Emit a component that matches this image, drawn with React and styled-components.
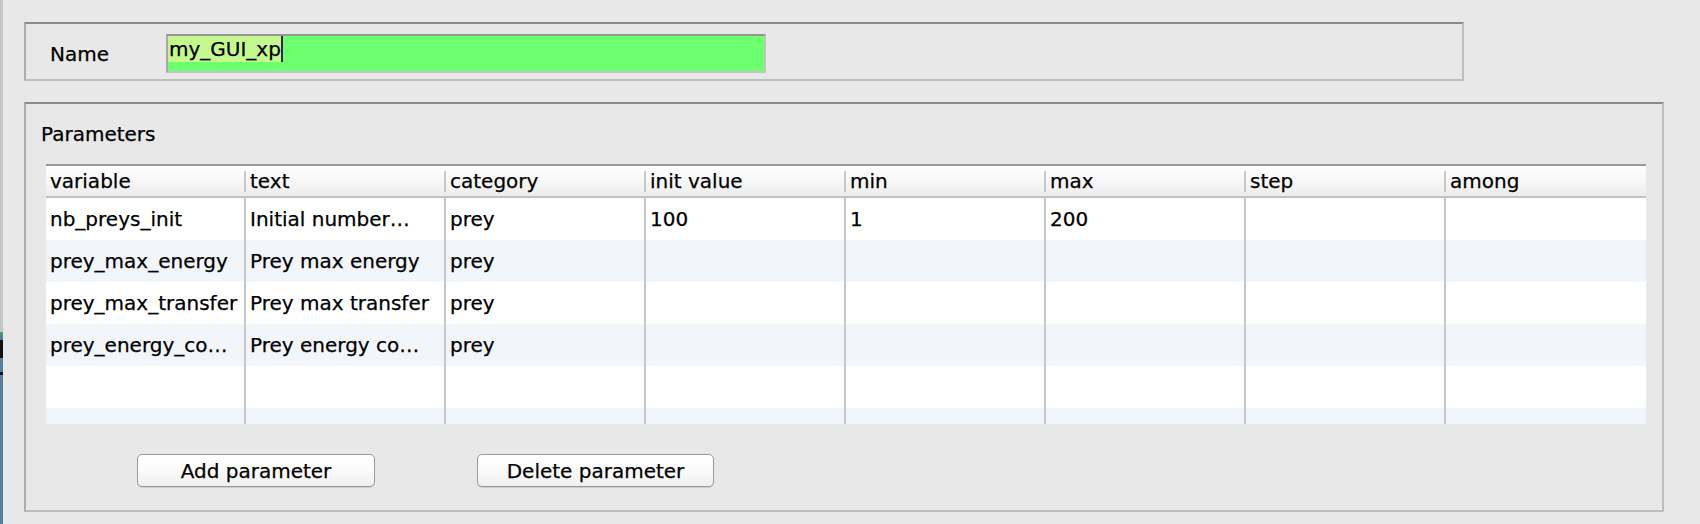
import React from 'react'
import styled, { createGlobalStyle } from 'styled-components'

const columns = ['variable', 'text', 'category', 'init value', 'min', 'max', 'step', 'among']

const rows = [
  ['nb_preys_init', 'Initial number…', 'prey', '100', '1', '200', '', ''],
  ['prey_max_energy', 'Prey max energy', 'prey', '', '', '', '', ''],
  ['prey_max_transfer', 'Prey max transfer', 'prey', '', '', '', '', ''],
  ['prey_energy_co…', 'Prey energy co…', 'prey', '', '', '', '', ''],
  ['', '', '', '', '', '', '', ''],
  ['', '', '', '', '', '', '', '']
]

function App () {
  return (
    <>
      <GlobalStyle />
      <Page>
        <DesktopEdge />
        <Main>
          <Panel $width={1440}>
            <NameRow>
              <Label>Name</Label>
              <NameField>
                <Selected>my_GUI_xp</Selected>
                <Caret />
              </NameField>
            </NameRow>
          </Panel>

          <Panel $width={1640}>
            <ParamsBody>
              <Title>Parameters</Title>
              <Table>
                <HeaderRow>
                  {columns.map(c => <HeaderCell key={c}>{c}</HeaderCell>)}
                </HeaderRow>
                <Rows>
                  {rows.map((r, i) => (
                    <Row key={i} $alt={i % 2 === 1}>
                      {r.map((v, j) => <Cell key={j}>{v}</Cell>)}
                    </Row>
                  ))}
                </Rows>
              </Table>
              <Buttons>
                <Button $width={238}>Add parameter</Button>
                <Button $width={237}>Delete parameter</Button>
              </Buttons>
            </ParamsBody>
          </Panel>
        </Main>
      </Page>
    </>
  )
}

const GlobalStyle = createGlobalStyle`
  html, body {
    margin: 0;
    padding: 0;
    background: #e8e8e8;
  }
  body {
    font-family: "DejaVu Sans", "Liberation Sans", sans-serif;
    font-size: 20px;
    color: #000;
    -webkit-text-stroke: 0.25px #000;
  }
`

const Page = styled.div`
  display: flex;
  width: 1700px;
  height: 524px;
  overflow: hidden;
  background: #e8e8e8;
`

const DesktopEdge = styled.div`
  flex: 0 0 3px;
  height: 524px;
  background:
    linear-gradient(to bottom,
      transparent 0, transparent 340px,
      #111 340px, #111 358px,
      transparent 358px, transparent 372px,
      #111 372px, #111 375px,
      transparent 375px),
    linear-gradient(to bottom,
      #c3c6c9 0, #c3c6c9 332px,
      #37b33c 332px, #37b33c 334px,
      #587e9e 334px, #587e9e 100%);
`

const Main = styled.div`
  display: flex;
  flex-direction: column;
  gap: 21px;
  padding: 22px 0 0 21px;
`

const Panel = styled.div`
  width: ${p => p.$width}px;
  box-sizing: border-box;
  border: 2px solid #bdbdbd;
  border-top-color: #8a8a8a;
  border-left-color: #adadad;
`

const NameRow = styled.div`
  display: grid;
  grid-template-columns: 116px 600px;
  align-items: center;
  padding: 10px 0 6px 24px;
`

const Label = styled.span`
  line-height: 23px;
  padding-top: 2px;
`

const NameField = styled.div`
  display: flex;
  align-items: flex-start;
  height: 39px;
  box-sizing: border-box;
  border: 2px solid #c4c4c4;
  border-top-color: #969696;
  border-left-color: #a8a8a8;
  background: #6cff6e;
`

const Selected = styled.span`
  display: block;
  height: 26px;
  line-height: 27px;
  overflow: hidden;
  padding-left: 1px;
  background: #c5f98f;
  white-space: nowrap;
`

const Caret = styled.span`
  display: block;
  width: 2px;
  height: 26px;
  background: #3d1f5c;
`

const ParamsBody = styled.div`
  display: flex;
  flex-direction: column;
  padding: 19px 0 23px 15px;
`

const Title = styled.div`
  line-height: 23px;
`

const Table = styled.div`
  width: 1600px;
  margin: 18px 0 0 5px;
  border-top: 2px solid #9a9a9a;
`

const HeaderRow = styled.div`
  display: grid;
  grid-template-columns: repeat(8, 200px);
  height: 30px;
  border-bottom: 2px solid #c2c2c2;
  background: linear-gradient(to bottom, #ffffff 0%, #f7f7f7 50%, #ececec 100%);
`

const HeaderCell = styled.div`
  padding: 0 4px;
  line-height: 30px;
  white-space: nowrap;
  overflow: hidden;
  background: linear-gradient(#c8c8c8, #c8c8c8) right center / 2px 21px no-repeat;

  &:last-child {
    background: none;
  }
`

const Rows = styled.div`
  height: 226px;
  overflow: hidden;
`

const Row = styled.div`
  display: grid;
  grid-template-columns: repeat(8, 200px);
  height: 42px;
  background: ${p => (p.$alt ? '#f2f5fa' : '#ffffff')};
`

const Cell = styled.div`
  padding: 0 4px;
  line-height: 42px;
  white-space: nowrap;
  overflow: hidden;
  text-overflow: ellipsis;
  border-right: 2px solid #c8c8c8;

  &:last-child {
    border-right: none;
  }
`

const Buttons = styled.div`
  display: flex;
  gap: 102px;
  margin: 30px 0 0 96px;
`

const Button = styled.button`
  width: ${p => p.$width}px;
  height: 33px;
  padding: 0;
  font-family: "DejaVu Sans", "Liberation Sans", sans-serif;
  font-size: 20px;
  color: #000;
  -webkit-text-stroke: 0.25px #000;
  border: 1px solid #9a9a9a;
  border-radius: 5px;
  background: linear-gradient(to bottom, #ffffff 0%, #fbfbfb 50%, #efefef 100%);
  box-shadow: 0 1px 0 rgba(0, 0, 0, 0.12);
`

export default App
